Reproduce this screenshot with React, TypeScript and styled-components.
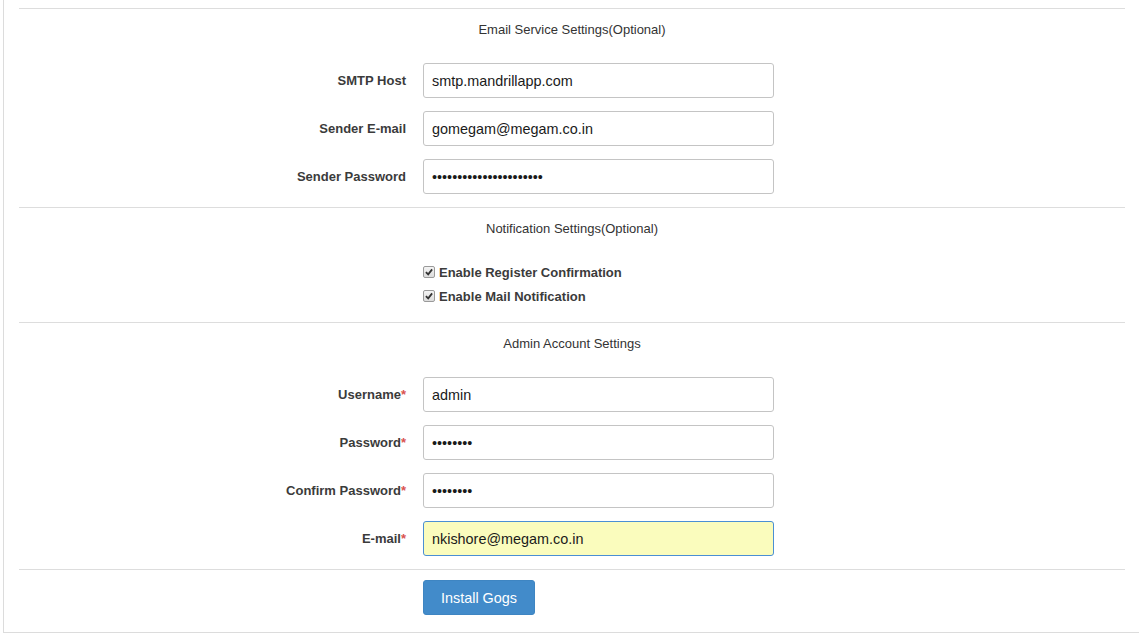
import React from 'react';
import styled, { createGlobalStyle } from 'styled-components';

const GlobalStyle = createGlobalStyle`
  body {
    margin: 0;
    background: #ffffff;
    font-family: 'Liberation Sans', Arial, sans-serif;
    color: #333333;
  }
`;

const Panel = styled.div`
  margin-left: 3px;
  width: 1136px;
  padding: 8px 0 17px 15px;
  border-left: 1px solid #dcdcdc;
  border-bottom: 1px solid #dcdcdc;
  box-sizing: border-box;
`;

const Inner = styled.div`
  width: 1106px;
`;

const Section = styled.div`
  border-top: 1px solid #dddddd;
`;

const Title = styled.div`
  text-align: center;
  font-size: 13px;
  line-height: 18px;
  padding-top: 12px;
  margin-bottom: 24px;
  color: #333333;
`;

const Row = styled.div`
  display: grid;
  grid-template-columns: 387px 351px;
  column-gap: 17px;
  align-items: center;
  margin-bottom: 13px;
`;

const Label = styled.label`
  text-align: right;
  font-size: 13px;
  font-weight: bold;
  color: #3b3b3b;
`;

const Req = styled.span`
  color: #d9534f;
`;

const Input = styled.input<{ $active?: boolean }>`
  box-sizing: border-box;
  width: 351px;
  height: 35px;
  padding: 0 8px;
  font-family: 'Liberation Sans', Arial, sans-serif;
  font-size: 14.4px;
  color: #1a1a1a;
  caret-color: #000000;
  border: 1px solid ${(p) => (p.$active ? '#4a8fd4' : '#c4c4c4')};
  background: ${(p) => (p.$active ? '#fafcbd' : '#ffffff')};
  border-radius: 3px;
  outline: none;
`;

const Checks = styled.div`
  margin: -2px 0 0 404px;
  padding-bottom: 14px;
`;

const CheckRow = styled.label`
  display: flex;
  align-items: center;
  height: 24px;
  font-size: 13px;
  font-weight: bold;
  color: #3b3b3b;
`;

const Box = styled.span`
  width: 10px;
  height: 10px;
  margin-right: 4px;
  border: 1px solid #9a9a9a;
  border-radius: 2px;
  background: linear-gradient(#f4f4f4, #dcdcdc);
  display: flex;
  align-items: center;
  justify-content: center;
`;

const Actions = styled.div`
  padding: 10px 0 0 404px;
`;

const Button = styled.button`
  height: 35px;
  width: 112px;
  background: #428bca;
  border: 1px solid #3e85c2;
  border-radius: 3px;
  color: #ffffff;
  font-family: 'Liberation Sans', Arial, sans-serif;
  font-size: 14.4px;
  padding: 0;
`;

const Check = ({ label }: { label: string }) => (
  <CheckRow>
    <Box>
      <svg width="8" height="8" viewBox="0 0 9 9">
        <path d="M1 4.6 L3.6 7.2 L8 1.6" fill="none" stroke="#333" strokeWidth="2" />
      </svg>
    </Box>
    {label}
  </CheckRow>
);

const Field = ({
  label,
  value,
  type = 'text',
  required,
  active,
}: {
  label: string;
  value: string;
  type?: string;
  required?: boolean;
  active?: boolean;
}) => (
  <Row>
    <Label>
      {label}
      {required && <Req>*</Req>}
    </Label>
    <Input
      type={type}
      defaultValue={value}
      $active={active}
      autoFocus={active}
      onFocus={(e) => {
        const el = e.currentTarget;
        el.setSelectionRange(el.value.length, el.value.length);
      }}
    />
  </Row>
);

export default function App() {
  return (
    <>
      <GlobalStyle />
      <Panel>
        <Inner>
          <Section>
            <Title>Email Service Settings(Optional)</Title>
            <Field label="SMTP Host" value="smtp.mandrillapp.com" />
            <Field label="Sender E-mail" value="gomegam@megam.co.in" />
            <Field label="Sender Password" type="password" value="xxxxxxxxxxxxxxxxxxxxxx" />
          </Section>
          <Section>
            <Title>Notification Settings(Optional)</Title>
            <Checks>
              <Check label="Enable Register Confirmation" />
              <Check label="Enable Mail Notification" />
            </Checks>
          </Section>
          <Section>
            <Title>Admin Account Settings</Title>
            <Field label="Username" value="admin" required />
            <Field label="Password" type="password" value="xxxxxxxx" required />
            <Field label="Confirm Password" type="password" value="xxxxxxxx" required />
            <Field label="E-mail" value="nkishore@megam.co.in" required active />
          </Section>
          <Section>
            <Actions>
              <Button>Install Gogs</Button>
            </Actions>
          </Section>
        </Inner>
      </Panel>
    </>
  );
}
